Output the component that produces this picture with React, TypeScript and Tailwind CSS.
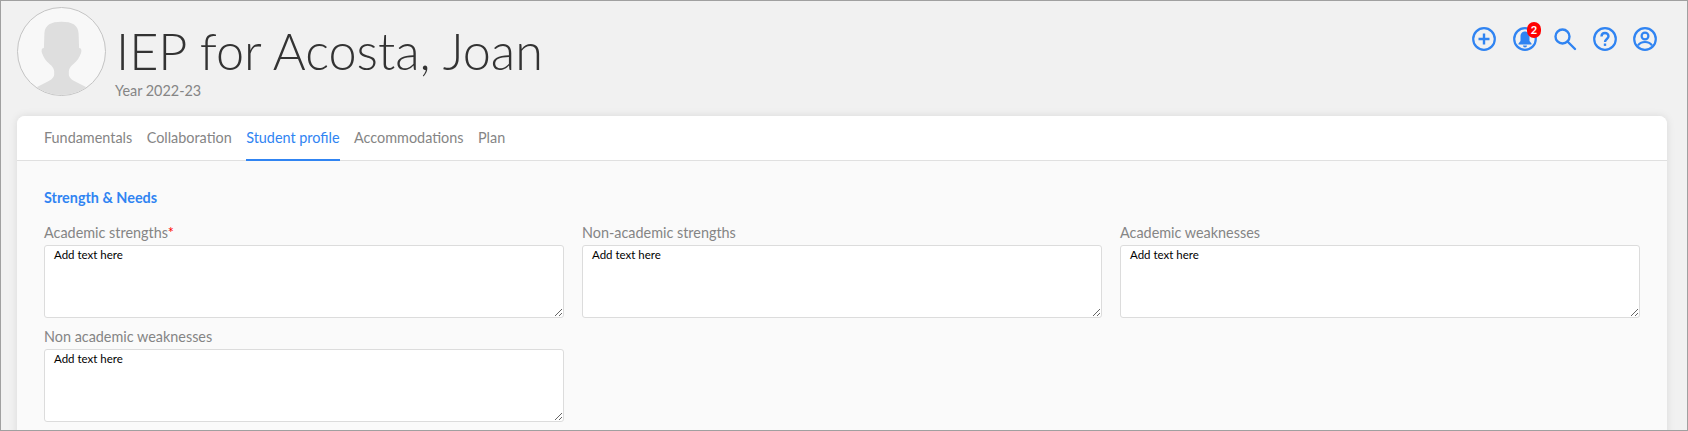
const fields = [
  { label: "Academic strengths", required: true },
  { label: "Non-academic strengths" },
  { label: "Academic weaknesses" },
  { label: "Non academic weaknesses" },
];

const tabs = ["Fundamentals", "Collaboration", "Student profile", "Accommodations", "Plan"];

function Avatar() {
  return (
    <div className="w-[89px] h-[89px] rounded-full border border-[#c4c4c4] bg-[#f8f8f8] overflow-hidden shrink-0">
      <svg viewBox="0 0 89 89" className="w-full h-full">
        <path
          d="M44.500 14C34 14 27.500 17 27 26L26.500 41C24.500 41 23.500 43 24.500 46C26 50.500 28.500 54 32 57C35.500 60 37 62.500 37 65V68C37 71 34 73.500 30 75.500L19 81L27 89H62L70 81L59 75.500C55 73.500 52 71 52 68V65C52 62.500 53.500 60 57 57C60.500 54 63 50.500 64.500 46C65.500 43 64.500 41 62.500 41L62 26C61.500 17 55 14 44.500 14Z"
          fill="#dedede"
        />
      </svg>
    </div>
  );
}

function HeaderIcons() {
  return (
    <div className="flex items-start gap-4 mr-[30px] mt-[26px] text-[#3084f2]">
      <svg viewBox="0 0 24 24" className="w-6 h-6 -ml-px mr-px" fill="none" stroke="currentColor" strokeWidth="2.2">
        <circle cx="12" cy="12" r="10.800" />
        <path d="M12 6.500v11M6.500 12h11" strokeWidth="2.400" />
      </svg>
      <div className="relative w-6 h-6">
        <svg viewBox="0 0 24 24" className="w-6 h-6" fill="none" stroke="currentColor" strokeWidth="2.2">
          <circle cx="12" cy="12" r="10.800" />
          <path
            d="M12 4.500c-3 0-4.500 2.300-4.500 5v4.500L5.500 16.500v1h13v-1L16.500 14V9.500c0-2.700-1.500-5-4.500-5zM10 18.500h4a2 2 0 0 1-4 0z"
            fill="currentColor"
            stroke="none"
          />
        </svg>
        <span className="absolute -top-[5px] left-[14px] w-[14px] h-[16px] rounded-full bg-[#f00] text-white text-[11px] font-bold leading-[16px] text-center">
          2
        </span>
      </div>
      <svg viewBox="0 0 24 24" className="w-6 h-6" fill="none" stroke="currentColor" strokeWidth="2.400">
        <circle cx="9.500" cy="9.500" r="7" />
        <path d="M14.500 14.500l7.500 7.500" strokeLinecap="round" />
      </svg>
      <svg viewBox="0 0 24 24" className="w-6 h-6" fill="none" stroke="currentColor" strokeWidth="2.2">
        <circle cx="12" cy="12" r="10.800" />
        <path d="M8.500 9.500c0-2 1.500-3.500 3.500-3.500s3.500 1.500 3.500 3.300c0 2.700-3.500 2.700-3.500 5.700" strokeWidth="2.400" />
        <path d="M12 16.500v2.400" strokeWidth="2.400" />
      </svg>
      <svg viewBox="0 0 24 24" className="w-6 h-6" fill="none" stroke="currentColor" strokeWidth="2.2">
        <circle cx="12" cy="12" r="10.800" />
        <circle cx="12" cy="9" r="3.400" />
        <path d="M5 18.500c1.500-2.500 4-3.500 7-3.500s5.500 1 7 3.500" />
      </svg>
    </div>
  );
}

export default function App() {
  return (
    <div className="h-[431px] overflow-hidden bg-[#f1f1f1] border border-[#a0a0a0] font-['Lato',sans-serif]">
      <div className="flex items-start justify-between h-[115px]">
        <div className="flex pl-4 pt-[6px]">
          <Avatar />
          <div className="ml-[9px]">
            <h1 className="text-[50.4px] leading-[60px] mt-[14px] ml-[1px] font-light text-[#333]">IEP for Acosta, Joan</h1>
            <div className="text-[14.4px] leading-5 text-[#858585]">Year 2022-23</div>
          </div>
        </div>
        <HeaderIcons />
      </div>

      <div className="ml-4 mr-5 rounded-t-lg bg-[#fafafa] shadow-[0_0_8px_rgba(0,0,0,0.1)] h-[400px]">
        <div className="flex gap-[14.5px] h-[45px] px-[27px] bg-white rounded-t-lg border-b border-[#e0e0e0]">
          {tabs.map((tab) => (
            <div
              key={tab}
              className={
                tab === "Student profile"
                  ? "h-[45px] text-[14.4px] leading-[44px] text-[#3084f2] border-b-2 border-[#3084f2]"
                  : "h-[45px] text-[14.4px] leading-[44px] text-[#858585]"
              }
            >
              {tab}
            </div>
          ))}
        </div>

        <div className="px-[27px] pt-[29px]">
          <h2 className="text-[14.4px] leading-4 font-bold text-[#3084f2] mb-[18px]">Strength &amp; Needs</h2>
          <div className="grid grid-cols-3 gap-x-[18px] gap-y-[10px]">
            {fields.map((field) => (
              <div key={field.label}>
                <label className="block text-[14.4px] leading-[17px] text-[#858585] mb-[4px]">
                  {field.label}
                  {field.required && <span className="text-[#f00]">*</span>}
                </label>
                <textarea
                  defaultValue="Add text here"
                  className="block w-full h-[73px] px-[9px] py-[1px] text-[11.5px] leading-4 text-black bg-white border border-[#dcdcdc] rounded-[3px] outline-none"
                />
              </div>
            ))}
          </div>
        </div>
      </div>
    </div>
  );
}
